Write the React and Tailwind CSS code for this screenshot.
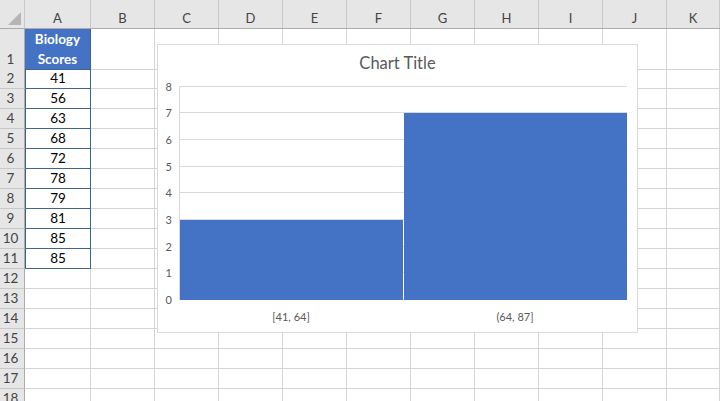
const COLS = ["A", "B", "C", "D", "E", "F", "G", "H", "I", "J", "K"];
const SCORES = [41, 56, 63, 68, 72, 78, 79, 81, 85, 85];
const ROWS = Array.from({ length: 18 }, (_, i) => i + 1);

const font = { fontFamily: "Lato, 'Open Sans', 'Liberation Sans', sans-serif" };

function HeaderRow() {
  return (
    <div className="grid h-[29px] grid-cols-[25px_66px_repeat(9,64px)_1fr] border-b border-[#ababab] bg-[#e6e6e6] text-[13px] text-[#444]">
      <div className="relative border-r border-[#c8c8c8]">
        <svg className="absolute bottom-[3px] right-[3px]" width="13" height="13" viewBox="0 0 13 13">
          <polygon points="13,0 13,13 0,13" fill="#b5b5b5" />
        </svg>
      </div>
      {COLS.map((c) => (
        <div key={c} className="flex items-center justify-center border-r border-[#c8c8c8] pt-[9px] leading-none">
          {c}
        </div>
      ))}
    </div>
  );
}

function Row({ n }) {
  const tall = n === 1;
  const score = n >= 2 && n <= 11 ? SCORES[n - 2] : null;
  return (
    <div
      className={`grid grid-cols-[25px_66px_repeat(9,64px)_1fr] text-[13.5px] ${tall ? "h-[40px]" : "h-[20px]"}`}
    >
      <div className="flex items-end justify-center border-r border-b border-[#ababab] border-b-[#c8c8c8] bg-[#e6e6e6] pr-[3px] leading-[19px] text-[#444]">
        {n}
      </div>
      {tall ? (
        <div className="flex flex-col items-center justify-center border-r border-b border-[#3e6490] bg-[#4472c4] font-bold leading-[20px] text-white">
          <span>Biology</span>
          <span>Scores</span>
        </div>
      ) : score !== null ? (
        <div className="flex items-center justify-center border-x border-b border-[#3e6490] leading-none text-black">
          {score}
        </div>
      ) : (
        <div className="border-r border-b border-[#d4d4d4]" />
      )}
      {COLS.slice(1).map((c) => (
        <div key={c} className="border-r border-b border-[#d4d4d4]" />
      ))}
    </div>
  );
}

function Chart() {
  const ticks = [0, 1, 2, 3, 4, 5, 6, 7, 8];
  const unit = 213.3 / 8;
  return (
    <div className="absolute left-[157px] top-[44px] h-[289px] w-[481px] border border-[#d9d9d9] bg-white text-[#595959]">
      <div className="pt-[8px] text-center text-[16.5px] leading-[20px]">Chart Title</div>
      <div className="relative ml-[21px] mt-[14px] h-[213px] w-[448px]">
        {ticks.map((t) => (
          <div
            key={t}
            className="absolute left-0 right-0 h-px bg-[#d9d9d9]"
            style={{ bottom: t * unit }}
          />
        ))}
        {ticks.map((t) => (
          <div
            key={"l" + t}
            className="absolute left-[-17px] w-[10px] text-right text-[11px] leading-[12px]"
            style={{ bottom: t * unit - 6 }}
          >
            {t}
          </div>
        ))}
        <div className="absolute bottom-0 left-0 top-0 w-px bg-[#d9d9d9]" />
        <div className="absolute bottom-0 left-[1px] flex h-full w-[447px] items-end gap-px">
          <div className="bg-[#4472c4]" style={{ width: 223, height: 3 * unit }} />
          <div className="bg-[#4472c4]" style={{ width: 223, height: 7 * unit }} />
        </div>
      </div>
      <div className="ml-[21px] mt-[11px] flex w-[448px] text-[11px] leading-[12px]">
        <div className="flex-1 text-center">[41, 64]</div>
        <div className="flex-1 text-center">(64, 87]</div>
      </div>
    </div>
  );
}

export default function App() {
  return (
    <div className="relative h-[401px] w-[720px] overflow-hidden bg-white" style={font}>
      <HeaderRow />
      {ROWS.map((n) => (
        <Row key={n} n={n} />
      ))}
      <Chart />
    </div>
  );
}
